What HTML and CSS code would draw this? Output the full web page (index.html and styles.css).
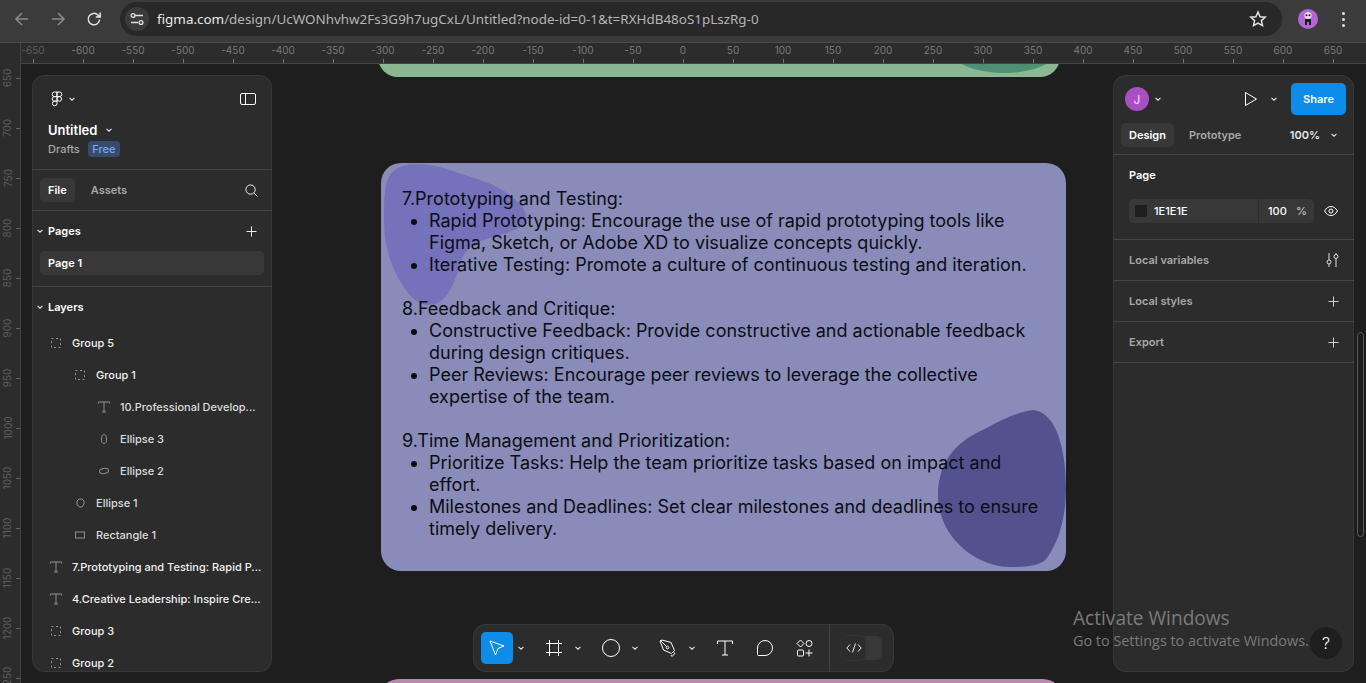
FILE: index.html
```html
<!DOCTYPE html>
<html lang="en">
<head>
    <meta charset="UTF-8">
    <title>Untitled – Figma</title>
    <link rel="stylesheet" href="styles.css">
</head>
<body>
<svg class="defs" width="0" height="0">
    <symbol id="chev" viewBox="0 0 8 8"><path d="M1.5 2.8 4 5.2 6.5 2.8" fill="none" stroke="currentColor" stroke-width="1.1"/></symbol>
    <symbol id="plus" viewBox="0 0 12 12"><path d="M6 .5v11M.5 6h11" fill="none" stroke="currentColor"/></symbol>
    <symbol id="group" viewBox="0 0 12 12"><rect x="1.5" y="1.5" width="9" height="9" fill="none" stroke="currentColor" stroke-dasharray="2 2.5"/></symbol>
    <symbol id="text" viewBox="0 0 12 12"><path d="M.5 2.5V1h11v1.5M6 1v10M4 11h4" fill="none" stroke="currentColor"/></symbol>
</svg>

<header class="chrome">
    <svg class="nav dim" width="16" height="16" viewBox="0 0 16 16"><path d="M14 8H2.5M8 2 2 8l6 6" fill="none" stroke="currentColor" stroke-width="1.6"/></svg>
    <svg class="nav dim" width="16" height="16" viewBox="0 0 16 16"><path d="M2 8h11.5M8 2l6 6-6 6" fill="none" stroke="currentColor" stroke-width="1.6"/></svg>
    <svg class="nav" width="16" height="16" viewBox="0 0 16 16"><path d="M13.6 8.5A5.7 5.7 0 1 1 12 4.1L14 6M14.2 1.6V6H9.8" fill="none" stroke="currentColor" stroke-width="1.5"/></svg>
    <div class="omnibox">
        <span class="site-btn">
            <svg width="14" height="14" viewBox="0 0 14 14"><path d="M5 3.5h8M1 10.500h7" fill="none" stroke="#e3e3e3" stroke-width="1.4"/><circle cx="3" cy="3.500" r="1.900" fill="none" stroke="#e3e3e3" stroke-width="1.300"/><circle cx="11" cy="10.500" r="1.900" fill="none" stroke="#e3e3e3" stroke-width="1.300"/></svg>
        </span>
        <span class="url"><span class="host">figma.com</span>/design/UcWONhvhw2Fs3G9h7ugCxL/Untitled?node-id=0-1&amp;t=RXHdB48oS1pLszRg-0</span>
        <svg class="star" width="18" height="18" viewBox="0 0 18 18"><path d="M9 2l2.100 4.700 5.100.5-3.800 3.400 1.100 5L9 13l-4.500 2.600 1.100-5L1.800 7.200l5.100-.5z" fill="none" stroke="#e3e3e3" stroke-width="1.500"/></svg>
    </div>
    <svg class="profile" width="20" height="20" viewBox="0 0 20 20"><circle cx="10" cy="10" r="10" fill="#b565d8"/><circle cx="10" cy="6.500" r="3.600" fill="#e6e0e6"/><circle cx="8.500" cy="6.300" r="1" fill="#222"/><circle cx="11.500" cy="6.300" r="1" fill="#222"/><path d="M7 10h6v6h-2v-3H9v3H7z" fill="#1c1c1c"/></svg>
    <span class="kebab"><i></i><i></i><i></i></span>
</header>

<div class="ruler-top">
    <div class="ruler-corner"></div>
    <div class="ruler-scale">
        <span class="faint">-650</span><span>-600</span><span>-550</span><span>-500</span><span>-450</span><span>-400</span><span>-350</span><span>-300</span><span>-250</span><span>-200</span><span>-150</span><span>-100</span><span>-50</span><span>0</span><span>50</span><span>100</span><span>150</span><span>200</span><span>250</span><span>300</span><span>350</span><span>400</span><span>450</span><span>500</span><span>550</span><span>600</span><span>650</span>
    </div>
</div>

<div class="workspace">
    <div class="ruler-left">
        <span><b>650</b></span><span><b>700</b></span><span><b>750</b></span><span><b>800</b></span><span><b>850</b></span><span><b>900</b></span><span><b>950</b></span><span><b>1000</b></span><span><b>1050</b></span><span><b>1100</b></span><span><b>1150</b></span><span><b>1200</b></span><span><b>1250</b></span>
    </div>

    <main class="canvas">
        <div class="frame frame-green"><div class="green-blob"></div></div>

        <section class="frame frame-purple">
            <svg class="blobs" width="685" height="408" viewBox="0 0 685 408">
                <path fill="#7472bb" d="M33 1C50 1 60 4 78 10 100 17 118 23 130 33 142 42 146 50 145 57 143 66 125 70 105 76 90 81 82 88 78 105 72 125 64 142 47 142 28 142 8 105 4 74 2 50 3 30 6 18 9 8 20 1 33 1Z"/>
                <path fill="#52528e" d="M652 247C630 250 612 262 592 272 570 284 557 305 557 332 557 375 596 404 629 404 645 404 660 403 666 395 680 375 685 350 685 324 685 300 680 250 652 247Z"/>
            </svg>
            <div class="copy">
                <p>7.Prototyping and Testing:</p>
                <ul>
                    <li>Rapid Prototyping: Encourage the use of rapid prototyping tools like Figma, Sketch, or Adobe XD to visualize concepts quickly.</li>
                    <li>Iterative Testing: Promote a culture of continuous testing and iteration.</li>
                </ul>
                <p>8.Feedback and Critique:</p>
                <ul>
                    <li>Constructive Feedback: Provide constructive and actionable feedback during design critiques.</li>
                    <li>Peer Reviews: Encourage peer reviews to leverage the collective expertise of the team.</li>
                </ul>
                <p>9.Time Management and Prioritization:</p>
                <ul>
                    <li>Prioritize Tasks: Help the team prioritize tasks based on impact and effort.</li>
                    <li>Milestones and Deadlines: Set clear milestones and deadlines to ensure timely delivery.</li>
                </ul>
            </div>
        </section>

        <div class="frame frame-pink"></div>

        <aside class="panel panel-left">
            <div class="file-head">
                <div class="logo-row">
                    <span class="logo">
                        <svg width="14" height="16" viewBox="0 0 14 16"><path d="M7 1H4.500a2.300 2.300 0 0 0 0 4.600H7zM7 5.600H4.500a2.300 2.300 0 0 0 0 4.600H7zM7 10.200H4.500A2.300 2.300 0 1 0 7 12.500zM7 1h2.500a2.300 2.300 0 0 1 0 4.600H7z" fill="none" stroke="#fff"/><circle cx="9.300" cy="7.900" r="2.300" fill="none" stroke="#fff"/></svg>
                        <svg class="chev" width="8" height="8"><use href="#chev"/></svg>
                    </span>
                    <svg width="16" height="12" viewBox="0 0 16 12"><rect x=".5" y=".5" width="15" height="11" rx="1.500" fill="none" stroke="#fff"/><path d="M5.500 .5v11" stroke="#fff"/></svg>
                </div>
                <div class="file-name">Untitled <svg class="chev" width="8" height="8"><use href="#chev"/></svg></div>
                <div class="file-meta">Drafts <span class="badge">Free</span></div>
            </div>
            <div class="tabs-row">
                <span class="tab active">File</span>
                <span class="tab">Assets</span>
                <svg class="search" width="13" height="13" viewBox="0 0 14 14"><circle cx="6" cy="6" r="5" fill="none" stroke="#fff"/><path d="M9.700 9.700 13.500 13.500" stroke="#fff"/></svg>
            </div>
            <div class="pages">
                <div class="section-head">
                    <svg class="chev" width="8" height="8"><use href="#chev"/></svg>
                    <span>Pages</span>
                    <svg class="add" width="11" height="11"><use href="#plus"/></svg>
                </div>
                <div class="page-item">Page 1</div>
            </div>
            <div class="layers">
                <div class="section-head">
                    <svg class="chev" width="8" height="8"><use href="#chev"/></svg>
                    <span>Layers</span>
                </div>
                <ul class="layer-list">
                    <li class="layer"><svg width="12" height="12"><use href="#group"/></svg>Group 5</li>
                    <li class="layer depth-1"><svg width="12" height="12"><use href="#group"/></svg>Group 1</li>
                    <li class="layer depth-2"><svg width="12" height="12"><use href="#text"/></svg>10.Professional Develop...</li>
                    <li class="layer depth-2"><svg width="12" height="12" viewBox="0 0 12 12"><ellipse cx="6" cy="6" rx="2.500" ry="4.500" fill="none" stroke="currentColor"/></svg>Ellipse 3</li>
                    <li class="layer depth-2"><svg width="12" height="12" viewBox="0 0 12 12"><ellipse cx="6" cy="6" rx="4.500" ry="2.500" fill="none" stroke="currentColor" transform="rotate(-10 6 6)"/></svg>Ellipse 2</li>
                    <li class="layer depth-1"><svg width="12" height="12" viewBox="0 0 12 12"><path d="M5 2h3l2 2v3l-2 3H6L3 8V4z" fill="none" stroke="currentColor"/></svg>Ellipse 1</li>
                    <li class="layer depth-1"><svg width="12" height="12" viewBox="0 0 12 12"><rect x="1.500" y="3" width="9" height="6" fill="none" stroke="currentColor"/></svg>Rectangle 1</li>
                    <li class="layer"><svg width="12" height="12"><use href="#text"/></svg>7.Prototyping and Testing: Rapid P...</li>
                    <li class="layer"><svg width="12" height="12"><use href="#text"/></svg>4.Creative Leadership: Inspire Cre...</li>
                    <li class="layer"><svg width="12" height="12"><use href="#group"/></svg>Group 3</li>
                    <li class="layer"><svg width="12" height="12"><use href="#group"/></svg>Group 2</li>
                </ul>
            </div>
        </aside>

        <aside class="panel panel-right">
            <div class="action-row">
                <span class="user">J</span>
                <svg class="chev" width="8" height="8"><use href="#chev"/></svg>
                <svg class="play" width="14" height="16" viewBox="0 0 14 16"><path d="M1.500 1.500v13l11-6.500z" fill="none" stroke="#fff" stroke-linejoin="round"/></svg>
                <svg class="chev" width="8" height="8"><use href="#chev"/></svg>
                <button class="share">Share</button>
            </div>
            <div class="design-tabs">
                <span class="tab active">Design</span>
                <span class="tab">Prototype</span>
                <span class="zoom-level">100%</span>
                <svg class="chev" width="8" height="8"><use href="#chev"/></svg>
            </div>
            <div class="page-block">
                <div class="block-title">Page</div>
                <div class="fill-row">
                    <div class="fill-field">
                        <span class="swatch"></span>
                        <span class="hex">1E1E1E</span>
                        <span class="opacity">100</span>
                        <span class="percent">%</span>
                    </div>
                    <svg width="14" height="10" viewBox="0 0 14 10"><path d="M.5 5C2.500 1.800 4.500 .5 7 .5S11.500 1.800 13.500 5C11.500 8.200 9.500 9.500 7 9.500S2.500 8.200 .5 5Z" fill="none" stroke="#fff"/><circle cx="7" cy="5" r="2" fill="none" stroke="#fff"/></svg>
                </div>
            </div>
            <div class="prop-row">Local variables
                <svg width="13" height="14" viewBox="0 0 13 14"><path d="M3 0v7M3 11v3M10 0v1.500M10 5.500V14" stroke="#ddd"/><circle cx="3" cy="9" r="2" fill="none" stroke="#ddd"/><circle cx="10" cy="3.500" r="2" fill="none" stroke="#ddd"/></svg>
            </div>
            <div class="prop-row">Local styles <svg class="add" width="11" height="11"><use href="#plus"/></svg></div>
            <div class="prop-row">Export <svg class="add" width="11" height="11"><use href="#plus"/></svg></div>
        </aside>

        <div class="scroll-thumb"></div>

        <nav class="toolbar">
            <span class="tool selected"><svg width="18" height="18" viewBox="0 0 18 18"><path d="M2 2l14 5-6 2.500L7.500 16z" fill="none" stroke="#fff" stroke-linejoin="round"/></svg></span>
            <svg class="chev" width="8" height="8"><use href="#chev"/></svg>
            <span class="tool"><svg width="16" height="16" viewBox="0 0 16 16"><path d="M3.500 0v16M12.500 0v16M0 3.500h16M0 12.500h16" fill="none" stroke="#fff"/></svg></span>
            <svg class="chev" width="8" height="8"><use href="#chev"/></svg>
            <span class="tool"><svg width="18" height="18" viewBox="0 0 18 18"><circle cx="9" cy="9" r="8.500" fill="none" stroke="#fff"/></svg></span>
            <svg class="chev" width="8" height="8"><use href="#chev"/></svg>
            <span class="tool"><svg width="18" height="18" viewBox="0 0 18 18"><path d="M1 2 3 1l9 2.500 3.500 8-3 3L4.500 11zM1.500 1.500 7.500 7.500M12 16l1 1.500 3-3-1.500-1" fill="none" stroke="#fff"/><circle cx="8.500" cy="8.500" r="1.300" fill="none" stroke="#fff"/></svg></span>
            <svg class="chev" width="8" height="8"><use href="#chev"/></svg>
            <span class="tool"><svg width="16" height="16" viewBox="0 0 16 16"><path d="M.5 4V1h15v3M8 1v14M5 15h6" fill="none" stroke="#fff"/></svg></span>
            <span class="tool"><svg width="18" height="18" viewBox="0 0 18 18"><path d="M9 1.500a7.500 7.500 0 1 1 0 15H2.500a1 1 0 0 1-1-1V9A7.500 7.500 0 0 1 9 1.500Z" fill="none" stroke="#fff"/></svg></span>
            <span class="tool"><svg width="18" height="18" viewBox="0 0 18 18"><path d="M4.500 1 8 4.500 4.500 8 1 4.500z" fill="none" stroke="#fff"/><circle cx="13" cy="4.500" r="3" fill="none" stroke="#fff"/><rect x="1.500" y="11" width="6" height="6" rx="1" fill="none" stroke="#fff"/><path d="M13 10.500v7M9.500 14h7" stroke="#fff"/></svg></span>
            <span class="toolbar-line"></span>
            <span class="dev-toggle"><span class="dev-knob"><svg width="16" height="10" viewBox="0 0 16 10"><path d="M4 1.500.8 5 4 8.500M12 1.500 15.200 5 12 8.500M9.500 .5l-3 9" fill="none" stroke="#eee"/></svg></span></span>
        </nav>

        <div class="activate">
            <div class="activate-title">Activate Windows</div>
            <div class="activate-sub">Go to Settings to activate Windows.</div>
        </div>
        <button class="help">?</button>
    </main>
</div>
</body>
</html>
```
FILE: styles.css
```css
* {
    box-sizing: border-box;
}

body {
    font-family: Inter, "Liberation Sans", sans-serif;
    font-size: 11px;
    background-color: #1e1e1e;
    color: #fff;
    margin: 0;
    width: 1366px;
    height: 683px;
    overflow: hidden;
    display: flex;
    flex-direction: column;
}

ul {
    margin: 0;
    padding: 0;
    list-style: none;
}

.defs {
    position: absolute;
}

.chev {
    color: #e6e6e6;
    flex: none;
}

/* browser bar */
.chrome {
    height: 43px;
    flex: none;
    display: flex;
    align-items: center;
    padding-bottom: 4px;
    background-color: #3b3b3b;
    border-bottom: 1px solid #4a4a4a;
    color: #e3e3e3;
}

.nav {
    flex: none;
    margin-left: 14px;
    margin-right: 6px;
}

.nav:first-child {
    margin-left: 14px;
}

.nav.dim {
    color: #8a8a8a;
}

.omnibox {
    width: 1162px;
    height: 34px;
    margin-left: 12px;
    border-radius: 17px;
    background-color: #282828;
    display: flex;
    align-items: center;
    padding-left: 5px;
    font-family: "Noto Sans", sans-serif;
    font-size: 13.430px;
    color: #b5b5b5;
}

.site-btn {
    width: 24px;
    height: 24px;
    border-radius: 50%;
    background-color: #3b3b3b;
    display: flex;
    align-items: center;
    justify-content: center;
    margin-right: 8px;
}

.host {
    color: #eaeaea;
}

.star {
    margin-left: auto;
    margin-right: 15px;
}

.profile {
    margin-left: 16px;
    flex: none;
}

.kebab {
    margin-left: 24px;
    display: flex;
    flex-direction: column;
    gap: 3px;
}

.kebab i {
    width: 3px;
    height: 3px;
    border-radius: 50%;
    background-color: #e3e3e3;
}

/* rulers */
.ruler-top {
    height: 21px;
    flex: none;
    display: flex;
    background-color: #2c2c2c;
    border-bottom: 1px solid #444;
}

.ruler-corner {
    width: 21px;
    flex: none;
    border-right: 1px solid #444;
}

.ruler-scale {
    display: flex;
    margin-left: -13px;
}

.ruler-scale span {
    width: 50px;
    flex: none;
    position: relative;
    text-align: center;
    font-size: 10px;
    line-height: 15px;
    color: #7a7a7a;
}

.ruler-scale span.faint {
    color: #5c5c5c;
}

.ruler-scale span::after {
    content: "";
    position: absolute;
    left: 25px;
    bottom: 0;
    width: 1px;
    height: 4px;
    background-color: #777;
}

.workspace {
    flex: 1;
    display: flex;
    min-height: 0;
}

.ruler-left {
    width: 21px;
    flex: none;
    background-color: #2c2c2c;
    border-right: 1px solid #444;
    overflow: hidden;
    display: flex;
    flex-direction: column;
    margin-top: -11px;
    padding-top: 0;
    position: relative;
    z-index: 1;
}

.ruler-left span {
    height: 50px;
    flex: none;
    position: relative;
    display: flex;
    align-items: center;
    justify-content: center;
}

.ruler-left span::after {
    content: "";
    position: absolute;
    right: 0;
    top: 25px;
    width: 4px;
    height: 1px;
    background-color: #666;
}

.ruler-left b {
    font-weight: 400;
    font-size: 10px;
    color: #5e5e5e;
    transform: rotate(-90deg);
    margin-left: -5px;
}

/* canvas */
.canvas {
    flex: 1;
    position: relative;
    overflow: hidden;
}

.frame {
    position: absolute;
    border-radius: 20px;
    overflow: hidden;
}

.frame-green {
    left: 357px;
    top: -100px;
    width: 682px;
    height: 113px;
    background-color: #8ab892;
}

.green-blob {
    position: absolute;
    left: 571px;
    top: 59px;
    width: 110px;
    height: 50px;
    border-radius: 50%;
    background-color: #4f8f74;
}

.frame-purple {
    left: 360px;
    top: 99px;
    width: 685px;
    height: 408px;
    background-color: #898cb8;
}

.blobs {
    position: absolute;
    left: 0;
    top: 0;
}

.copy {
    position: relative;
    padding: 25px 21px;
    font-size: 18px;
    line-height: 22px;
    color: #0c0c14;
}

.copy p {
    margin: 0;
}

.copy ul {
    list-style: disc;
    padding-left: 27px;
    margin-bottom: 22px;
}

.frame-pink {
    left: 358px;
    top: 615px;
    width: 684px;
    height: 100px;
    background-color: #b888b0;
}

/* floating panels */
.panel {
    position: absolute;
    top: 11px;
    height: 597px;
    background-color: #2c2c2c;
    border-radius: 13px;
    overflow: hidden;
    box-shadow: inset 0 0 0 1px #383838;
}

.panel-left {
    left: 11px;
    width: 240px;
}

.panel-right {
    left: 1092px;
    width: 241px;
}

.file-head {
    height: 95px;
    padding: 16px 16px 0;
    border-bottom: 1px solid #444;
}

.logo-row {
    display: flex;
    align-items: center;
    justify-content: space-between;
    height: 16px;
}

.logo {
    display: flex;
    align-items: center;
    gap: 4px;
    margin-left: 2px;
}

.file-name {
    margin-top: 15px;
    font-size: 13px;
    font-weight: 600;
    line-height: 16px;
    display: flex;
    align-items: center;
    gap: 8px;
}

.file-meta {
    margin-top: 3px;
    color: #a8a8a8;
    font-weight: 500;
    display: flex;
    align-items: center;
    gap: 8px;
    height: 16px;
}

.badge {
    background-color: #394a6d;
    color: #74aef0;
    border-radius: 4px;
    padding: 0 4.500px;
    line-height: 16px;
}

.tabs-row {
    height: 41px;
    padding: 0 14px 0 8px;
    display: flex;
    align-items: center;
    gap: 8px;
    border-bottom: 1px solid #444;
}

.tab {
    height: 24px;
    line-height: 24px;
    padding: 0 8px;
    border-radius: 5px;
    font-weight: 600;
    color: #a8a8a8;
}

.tab.active {
    background-color: #383838;
    color: #fff;
}

.search {
    margin-left: auto;
}

.pages {
    height: 76px;
    border-bottom: 1px solid #444;
}

.section-head {
    height: 40px;
    padding: 0 15px 0 4px;
    display: flex;
    align-items: center;
    gap: 4px;
    font-weight: 600;
}

.section-head .add {
    margin-left: auto;
}

.page-item {
    height: 24px;
    line-height: 24px;
    margin: 0 8px;
    padding-left: 8px;
    border-radius: 5px;
    background-color: #383838;
    font-weight: 600;
}

.layer {
    height: 32px;
    padding-left: 18px;
    display: flex;
    align-items: center;
    gap: 10px;
    font-weight: 500;
    white-space: nowrap;
    color: #f0f0f0;
}

.layer svg {
    color: #8f8f8f;
    flex: none;
}

.depth-1 {
    padding-left: 42px;
}

.depth-2 {
    padding-left: 66px;
}

.depth-2,
.depth-1:nth-child(n+6) {
    color: #dcdcdc;
}

/* right panel */
.action-row {
    height: 48px;
    padding: 8px 8px 0 12px;
    display: flex;
    align-items: flex-start;
}

.action-row svg {
    margin-top: 12px;
}

.action-row .play {
    margin-top: 8px;
    margin-left: 82px;
    margin-right: 12px;
}

.action-row .chev:nth-of-type(1) {
    margin-left: 5px;
}

.user {
    width: 24px;
    height: 24px;
    margin-top: 4px;
    border-radius: 50%;
    background-color: #a94fc4;
    color: #e8cdf0;
    font-size: 12px;
    font-weight: 500;
    display: flex;
    align-items: center;
    justify-content: center;
}

.share {
    width: 55px;
    height: 32px;
    margin-left: 13px;
    border: none;
    border-radius: 5px;
    background-color: #0d8ce9;
    color: #fff;
    font-family: inherit;
    font-size: 11px;
    font-weight: 600;
}

.design-tabs {
    height: 32px;
    padding: 0 16px 8px 8px;
    display: flex;
    align-items: center;
    gap: 7px;
    border-bottom: 1px solid #444;
}

.zoom-level {
    margin-left: auto;
    font-weight: 600;
    color: #e6e6e6;
    margin-right: 3px;
}

.page-block {
    height: 85px;
    padding: 12px 16px 0;
    border-bottom: 1px solid #444;
}

.block-title {
    font-weight: 600;
    line-height: 16px;
}

.fill-row {
    margin-top: 16px;
    display: flex;
    align-items: center;
    justify-content: space-between;
}

.fill-field {
    width: 185px;
    height: 24px;
    border-radius: 5px;
    background-color: #383838;
    display: flex;
    align-items: center;
    padding: 0 7px 0 6px;
    font-weight: 500;
}

.swatch {
    width: 12px;
    height: 12px;
    background-color: #1e1e1e;
    border-radius: 1px;
    flex: none;
}

.hex {
    margin-left: 7px;
    width: 105px;
    height: 24px;
    line-height: 24px;
    border-right: 1px solid #2c2c2c;
    flex: none;
}

.opacity {
    margin-left: 9px;
}

.percent {
    margin-left: auto;
    color: #c4c4c4;
}

.prop-row {
    height: 41px;
    padding: 0 15px 0 16px;
    display: flex;
    align-items: center;
    justify-content: space-between;
    font-weight: 600;
    color: #a8a8a8;
    border-bottom: 1px solid #444;
}

.prop-row svg {
    color: #ddd;
}

.scroll-thumb {
    position: absolute;
    left: 1336px;
    top: 268px;
    width: 7px;
    height: 205px;
    border: 1px solid #5a5a5a;
    border-radius: 4px;
}

/* bottom toolbar */
.toolbar {
    position: absolute;
    left: 452px;
    top: 560px;
    width: 421px;
    height: 48px;
    padding: 0 12px 0 8px;
    border-radius: 13px;
    background-color: #2c2c2c;
    box-shadow: inset 0 0 0 1px #383838;
    display: flex;
    align-items: center;
}

.tool {
    width: 32px;
    height: 32px;
    flex: none;
    border-radius: 5px;
    display: flex;
    align-items: center;
    justify-content: center;
}

.tool.selected {
    background-color: #0d8ce9;
}

.toolbar .chev {
    margin: 0 4px;
}

.toolbar .chev + .tool {
    margin-left: 9px;
}

.toolbar .tool + .tool {
    margin-left: 8px;
}

.toolbar-line {
    width: 1px;
    height: 48px;
    margin-left: 8px;
    background-color: #444;
    flex: none;
}

.dev-toggle {
    width: 40px;
    height: 24px;
    margin-left: 12px;
    border-radius: 6px;
    background-color: #383838;
    flex: none;
}

.dev-knob {
    width: 23px;
    height: 24px;
    border-radius: 6px;
    background-color: #2c2c2c;
    box-shadow: 0 0 0 1px #333;
    display: flex;
    align-items: center;
    justify-content: center;
}

/* windows watermark */
.activate {
    position: absolute;
    left: 1052px;
    top: 542px;
    font-family: "Open Sans", sans-serif;
    color: #7b7b7b;
    white-space: nowrap;
}

.activate-title {
    font-size: 19.100px;
    line-height: 24px;
}

.activate-sub {
    font-size: 14.400px;
    line-height: 22px;
}

.help {
    position: absolute;
    left: 1289px;
    top: 563px;
    width: 32px;
    height: 32px;
    border: none;
    border-radius: 50%;
    background-color: #1e1e1e;
    color: #fff;
    font-family: inherit;
    font-size: 16px;
    font-weight: 300;
}
```
